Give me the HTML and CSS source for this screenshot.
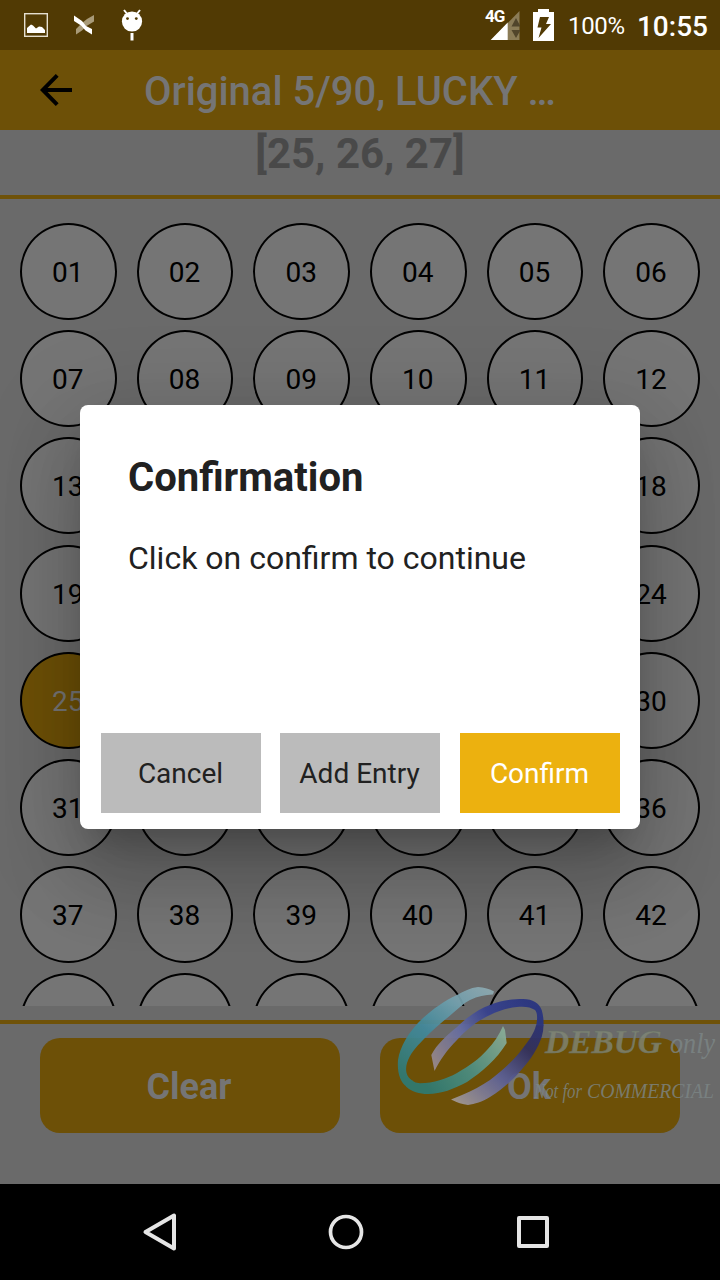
FILE: index.html
```
<!DOCTYPE html>
<html lang="en">
<head>
<meta charset="utf-8">
<title>Original 5/90</title>
<link rel="stylesheet" href="styles.css">
</head>
<body>
<div class="screen">
  <header class="status">
    <div class="status-left">
      <svg width="24" height="24" viewBox="0 0 24 24"><rect x=".7" y=".7" width="22.6" height="22.6" fill="none" stroke="#e5dfd0" stroke-width="1.4"/><path fill="#fff" d="M3 20v-5l4-3.500 2 1 3 3 3-2 3 .5 3 3v3z"/></svg>
      <svg width="20" height="20" viewBox="0 0 20 20"><path fill="#a89a78" d="M20 0v6.500L12.500 11 8 15.500 2 19.500V14l5.500-5.500L13 4z"/><path fill="#fff" d="M0 .5L8 6l4 5 6 3v5.500l-6.500-4L7 10.500 0 6z"/></svg>
      <svg width="22" height="32" viewBox="0 0 22 32"><path stroke="#fff" stroke-width="2" d="M3 1l4 5M19 1l-4 5"/><circle cx="11" cy="12.5" r="10.1" fill="#fff"/><circle cx="6.5" cy="9.6" r="1.4" fill="#513a04"/><circle cx="15.3" cy="9.6" r="1.4" fill="#513a04"/><path fill="#fff" d="M9.500 24h3v7.500h-3z"/></svg>
    </div>
    <div class="status-right">
      <div class="signal">
        <svg width="30" height="30" viewBox="0 0 30 30"><path fill="#8b7c57" d="M29.5 0v29H1z"/><path fill="#fff" d="M17.700 11.500V29H.7z"/><path fill="#51452b" d="M26 7l4.500 8.500h-9zM21.500 19h9L26 27z"/></svg>
        <span class="net">4G</span>
      </div>
      <svg class="battery" width="21" height="32" viewBox="0 0 21 32"><path fill="#fff" d="M5 0h11v3h5v29H0V3h5z"/><path fill="#513a04" d="M7 8h9l-3 7h5L5.500 29 8.500 18.500H4.500z"/></svg>
      <span class="percent">100%</span>
      <span class="clock">10:55</span>
    </div>
  </header>
  <div class="appbar">
    <svg class="back" width="32" height="32" viewBox="0 0 32 32" fill="none" stroke="#000" stroke-width="4"><path d="M32 16H3M17.200 1.400L2.700 16l14.500 14.600"/></svg>
    <h1 class="title">Original 5/90, LUCKY …</h1>
  </div>
  <div class="picked">[25, 26, 27]</div>
  <main class="board">
    <div class="ball">01</div><div class="ball">02</div><div class="ball">03</div><div class="ball">04</div><div class="ball">05</div><div class="ball">06</div>
    <div class="ball">07</div><div class="ball">08</div><div class="ball">09</div><div class="ball">10</div><div class="ball">11</div><div class="ball">12</div>
    <div class="ball">13</div><div class="ball"></div><div class="ball"></div><div class="ball"></div><div class="ball"></div><div class="ball">18</div>
    <div class="ball">19</div><div class="ball"></div><div class="ball"></div><div class="ball"></div><div class="ball"></div><div class="ball">24</div>
    <div class="ball on">25</div><div class="ball on"></div><div class="ball on"></div><div class="ball"></div><div class="ball"></div><div class="ball">30</div>
    <div class="ball">31</div><div class="ball"></div><div class="ball"></div><div class="ball"></div><div class="ball"></div><div class="ball">36</div>
    <div class="ball">37</div><div class="ball">38</div><div class="ball">39</div><div class="ball">40</div><div class="ball">41</div><div class="ball">42</div>
    <div class="ball"></div><div class="ball"></div><div class="ball"></div><div class="ball"></div><div class="ball"></div><div class="ball"></div>
  </main>
  <footer class="actions">
    <div class="action">Clear</div>
    <div class="action">Ok</div>
  </footer>
  <nav class="nav">
    <svg class="nav-back" width="36" height="40" viewBox="0 0 36 40" fill="none" stroke="#e5e5e5" stroke-width="4" stroke-linejoin="round"><path d="M32 3.500v33L3.500 20z"/></svg>
    <svg class="nav-home" width="36" height="36" viewBox="0 0 36 36" fill="none" stroke="#e5e5e5" stroke-width="3.700"><circle cx="18" cy="18" r="15.500"/></svg>
    <svg width="32" height="32" viewBox="0 0 32 32" fill="none" stroke="#e5e5e5" stroke-width="4" stroke-linejoin="round"><path d="M2 2h28v28H2z"/></svg>
  </nav>

  <section class="dialog">
    <h2 class="dialog-title">Confirmation</h2>
    <p class="dialog-text">Click on confirm to continue</p>
    <div class="dialog-buttons">
      <div class="button">Cancel</div>
      <div class="button">Add Entry</div>
      <div class="button primary">Confirm</div>
    </div>
  </section>

  <svg class="watermark" width="330" height="130" viewBox="390 980 330 130">
    <defs>
      <linearGradient id="teal" gradientUnits="userSpaceOnUse" x1="490" y1="988" x2="412" y2="1085"><stop offset="0" stop-color="#8fabb2"/><stop offset=".25" stop-color="#74a1ae"/><stop offset=".58" stop-color="#42899b"/><stop offset="1" stop-color="#2e7a74"/></linearGradient>
      <linearGradient id="mint" gradientUnits="userSpaceOnUse" x1="425" y1="1085" x2="505" y2="1035"><stop offset="0" stop-color="#2f7a72"/><stop offset=".5" stop-color="#4d8f83"/><stop offset="1" stop-color="#88ad98"/></linearGradient>
      <linearGradient id="blue" gradientUnits="userSpaceOnUse" x1="432" y1="1065" x2="530" y2="1005"><stop offset="0" stop-color="#9a8b8d"/><stop offset=".38" stop-color="#646ca2"/><stop offset=".65" stop-color="#36418f"/><stop offset="1" stop-color="#283380"/></linearGradient>
      <linearGradient id="violet" gradientUnits="userSpaceOnUse" x1="540" y1="1015" x2="460" y2="1105"><stop offset="0" stop-color="#272f7a"/><stop offset=".28" stop-color="#31305f"/><stop offset=".6" stop-color="#5c619a"/><stop offset="1" stop-color="#a29997"/></linearGradient>
    </defs>
    <g opacity=".93">
      <path fill="url(#teal)" d="M494 991.500C490 989 484 987.500 478 987C470 988 464 991 457 995C444 1001 433 1009 423 1018C408 1032 400 1047 398 1060C397 1072 400 1082 407 1087L413 1081C406 1077 405 1070 407 1063C410 1054 416 1047 423 1040C433 1029 444 1021 453 1013C459 1008 464 1003 470 1000C478 996 485 995 493 994.500Z"/>
      <path fill="url(#mint)" d="M503 1026L505 1030L506.700 1043C497 1059 482 1072 467 1082C454 1089 441 1094 428 1094C419 1094 412 1092 406 1086.500L412 1080.500Q415 1083 420 1083.300C434 1083 446 1079 457 1073C469 1066 479 1059 487 1050C494 1043 499 1035 503 1026Z"/>
      <path fill="url(#blue)" d="M434.500 1071L431.300 1055C437 1044 447 1035 457 1027C467 1017 479 1009 490 1005C502 1000 513 999 523 999C533 999 539 1003 541.700 1010Q544 1018 543.500 1026L536 1026C538 1017 537 1012 535 1010C531 1007 524 1006 517 1007C507 1008 498 1011 490 1015C478 1020 466 1030 457 1040C447 1050 440 1060 434.500 1071Z"/>
      <path fill="url(#violet)" d="M543.500 1025.500Q543.500 1031 541.700 1037C538 1048 531 1059 523 1068C513 1080 503 1089 490 1097C482 1102 475 1104 468 1105Q460 1104 451 1099.500L462 1095C472 1091 481 1086 490 1080C503 1070 514 1060 523 1048C530 1039 534 1033 536 1025.500Z"/>
    </g>
    <g class="mark-text">
      <text class="mark-debug" x="545" y="1053" textLength="117" lengthAdjust="spacingAndGlyphs">DEBUG</text>
      <text class="mark-only" x="670" y="1053" textLength="45" lengthAdjust="spacingAndGlyphs">only</text>
      <text class="mark-note" x="534" y="1098" textLength="48" lengthAdjust="spacingAndGlyphs">Not for</text>
      <text class="mark-note" x="587" y="1098" textLength="127" lengthAdjust="spacingAndGlyphs">COMMERCIAL</text>
    </g>
  </svg>
</div>
</body>
</html>
```
FILE: styles.css
```
* { box-sizing: border-box; }
body { margin: 0; background: #6a6a6a; font-family: Roboto, sans-serif; }
h1, h2, p { margin: 0; }
svg { display: block; flex: none; }
.screen { position: relative; display: flex; flex-direction: column; width: 720px; height: 1280px; overflow: hidden; background: #6a6a6a; }

.status { flex: none; display: flex; justify-content: space-between; height: 50px; padding: 0 12px 0 24px; background: #513a04; color: #fff; }
.status-left { display: flex; align-items: center; gap: 26px; }
.status-left svg:last-child { margin-left: 1px; }
.status-right { display: flex; align-items: center; }
.signal { position: relative; margin: 2px 13px 0 0; }
.net { position: absolute; left: -5px; top: -3px; font-size: 17px; line-height: 17px; font-weight: 700; letter-spacing: -1px; }
.battery { margin-right: 14px; }
.percent { width: 69px; font-size: 24px; padding-top: 2px; letter-spacing: -.3px; }
.clock { font-size: 28px; font-weight: 500; padding-top: 3px; }

.appbar { flex: none; display: flex; align-items: center; height: 80px; padding-left: 40px; background: #6d5007; }
.title { margin-left: 72px; padding-top: 4px; font-size: 40px; line-height: 48px; font-weight: 500; color: #757575; white-space: nowrap; letter-spacing: -.03px; }

.picked { flex: none; height: 69px; border-bottom: 4px solid #6f5209; text-align: center; font-size: 42px; line-height: 48px; font-weight: 700; color: #494949; }

.board { flex: none; display: grid; grid-template-columns: repeat(6, 96.670px); grid-auto-rows: 97px; justify-content: space-between; row-gap: 10.200px; height: 807px; padding: 24px 20px 0; overflow: hidden; }
.ball { display: flex; align-items: center; justify-content: center; border: 2px solid #000; border-radius: 50%; background: #757575; font-size: 28px; color: #000; padding: 2px 1px 0 0; }
.on { background: #6d5007; color: #757575; }

.actions { flex: none; display: flex; gap: 40px; height: 164px; margin-top: 14px; padding: 14px 40px 0; border-top: 4px solid #6f5209; }
.action { flex: 1; height: 95px; padding-right: 2px; border-radius: 20px; background: #6d5007; color: #757575; font-size: 36px; line-height: 98px; font-weight: 700; text-align: center; }

.nav { flex: none; display: flex; align-items: center; height: 96px; margin-top: auto; padding-left: 142px; background: #000; }
.nav-home { margin: 0 153px 0 150px; }

.dialog { position: absolute; left: 80px; top: 405px; display: flex; flex-direction: column; width: 560px; height: 424px; padding: 49px 20.500px 16px; border-radius: 8px; background: #fff; color: #212121; box-shadow: 0 22px 30px -14px rgba(0,0,0,.2), 0 48px 76px 6px rgba(0,0,0,.14), 0 18px 92px 16px rgba(0,0,0,.12); }
.dialog-title { padding-left: 27.500px; font-size: 40px; line-height: 48px; font-weight: 700; }
.dialog-text { margin-top: 36px; padding-left: 27.500px; font-size: 32px; line-height: 40px; }
.dialog-buttons { display: flex; justify-content: space-between; margin-top: auto; }
.button { width: 160px; height: 80px; background: #bbb; font-size: 28px; line-height: 82px; text-align: center; }
.button:nth-child(2) { padding-right: 1px; }
.primary { background: #ecb10f; color: #fff; }

.watermark { position: absolute; left: 390px; top: 980px; }
.mark-text { font-family: "Liberation Serif", serif; font-style: italic; fill: #7d8787; fill-opacity: .8; }
.mark-debug { font-size: 33px; font-weight: 700; fill: #828878; stroke: #657064; stroke-width: .4px; }
.mark-only { font-size: 29px; }
.mark-note { font-size: 20px; }
```
